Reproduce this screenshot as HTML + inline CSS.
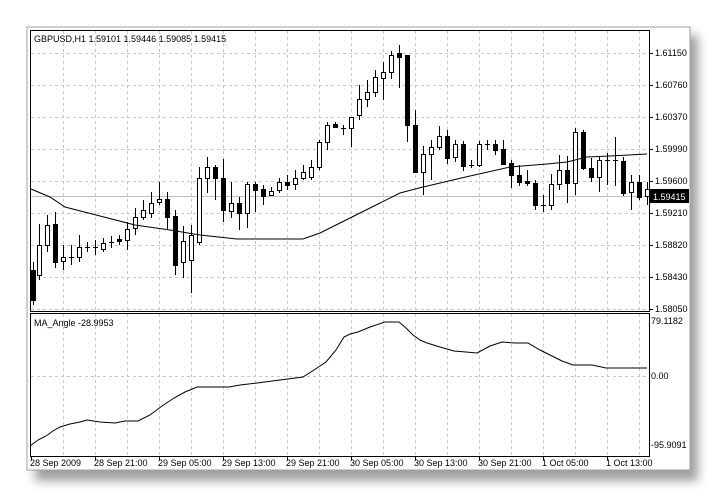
<!DOCTYPE html>
<html><head><meta charset="utf-8"><style>
html,body{margin:0;padding:0;background:#fff;width:717px;height:498px;overflow:hidden}
svg{display:block}
text{font-family:"Liberation Sans",sans-serif;font-size:9px;fill:#000}
</style></head><body>
<svg id="s" width="717" height="498" viewBox="0 0 717 498" xmlns="http://www.w3.org/2000/svg">
<defs>
<filter id="sh" x="-5%" y="-5%" width="115%" height="115%"><feGaussianBlur stdDeviation="5"/></filter>
</defs>
<rect x="35" y="35" width="663" height="446" fill="#888" filter="url(#sh)" opacity="0.8"/>
<rect x="27" y="27" width="663" height="443" fill="#fff" stroke="#a0a0a0"/>
<g id="grid" stroke="#c8c8c8" stroke-dasharray="3,3" stroke-width="1"></g>
<line x1="31" y1="196.5" x2="649" y2="196.5" stroke="#c0c0c0"/>
<g id="c" shape-rendering="crispEdges"></g>
<polyline fill="none" stroke="#000" stroke-width="1" points="31,189 50,197 65,207 100,216 135,225 170,230 200,235 237,239 303,239 320,233 340,223 360,213 380,203 400,193 423,187 470,176 510,167 547,164 567,162 587,157 610,156 647,154"/>
<polyline fill="none" stroke="#000" stroke-width="1" points="30,446 38,440 46,436 53,431 60,427 70,424 80,422 87,420 100,422 115,423 125,421 138,421 150,415 162,406 174,398 185,392 197,387 229,387 240,385 257,383 280,380 303,377 314,370 326,362 336,350 344,337 350,334 358,332 370,327 385,322 399,322 406,328 413,335 420,340 427,343 440,347 454,351 466,352 477,353 490,346 502,342 515,343 528,343 540,350 550,355 562,361 573,365 592,365 606,368 647,368"/>
<rect x="30.5" y="30.5" width="619" height="281" fill="none" stroke="#000"/>
<rect x="30.5" y="313.5" width="619" height="143" fill="none" stroke="#000"/>
<text x="34" y="42">GBPUSD,H1  1.59101 1.59446 1.59085 1.59415</text>
<text x="34" y="326">MA_Angle -28.9953</text>
<g id="ax"></g>
<rect x="650" y="189" width="39" height="14" fill="#000"/>
<text x="653" y="200" style="fill:#fff">1.59415</text>
</svg>
<script>
var ns="http://www.w3.org/2000/svg";
function el(p,n,a,t){var e=document.createElementNS(ns,n);for(var k in a)e.setAttribute(k,a[k]);if(t)e.textContent=t;document.getElementById(p).appendChild(e);}
for(var x=63;x<=639;x+=32){el("grid","line",{x1:x+.5,y1:31,x2:x+.5,y2:311});el("grid","line",{x1:x+.5,y1:314,x2:x+.5,y2:456});}
for(var y=53;y<=309;y+=32){el("grid","line",{x1:31,y1:y+.5,x2:649,y2:y+.5});}
el("grid","line",{x1:31,y1:376.5,x2:649,y2:376.5});
var pl=["1.61150","1.60760","1.60370","1.59990","1.59600","1.59210","1.58820","1.58430","1.58050"];
for(var i=0;i<9;i++){var yy=53+32*i;if(i!=4&&i!=5||true){el("ax","line",{x1:649,y1:yy+.5,x2:653,y2:yy+.5,stroke:"#000"});}
 el("ax","text",{x:655,y:yy+3},pl[i]);}
el("ax","text",{x:651,y:324},"79.1182");el("ax","text",{x:651,y:379},"0.00");el("ax","text",{x:651,y:448},"-95.9091");
var tl=["28 Sep 2009","28 Sep 21:00","29 Sep 05:00","29 Sep 13:00","29 Sep 21:00","30 Sep 05:00","30 Sep 13:00","30 Sep 21:00","1 Oct 05:00","1 Oct 13:00"];
for(var i=0;i<10;i++){var xx=31+64*i;el("ax","line",{x1:xx+.5,y1:456,x2:xx+.5,y2:460,stroke:"#000"});el("ax","text",{x:xx-1,y:466},tl[i]);}
// x, type(w/b/c), bodyTop, bodyBot, wickTop, wickBot
var C=[[33,'b',270,300,262,305],[39,'w',245,275,224,280],[47,'w',225,245,215,252],[55,'b',224,262,212,268],[63,'w',257,261,245,270],[71,'c',257,257,245,265],[79,'w',247,257,235,262],[87,'c',247,247,242,252],[95,'c',247,247,240,255],[103,'w',243,249,238,252],[111,'c',242,242,236,248],[119,'b',239,241,235,245],[127,'w',229,240,222,250],[135,'w',217,228,208,235],[143,'w',210,217,200,220],[151,'w',203,213,192,218],[159,'w',199,202,182,205],[167,'b',199,217,192,230],[175,'b',216,265,210,275],[183,'w',241,262,226,278],[191,'w',235,260,225,293],[199,'w',178,242,167,245],[207,'w',167,178,157,193],[215,'b',167,178,165,200],[223,'b',178,210,159,222],[231,'w',203,211,182,218],[239,'b',203,213,197,230],[247,'w',184,213,182,228],[255,'b',184,190,182,212],[263,'b',189,196,185,205],[271,'w',191,195,187,196],[279,'w',182,190,178,193],[287,'b',182,185,175,190],[295,'w',178,184,170,190],[303,'w',172,178,165,180],[311,'w',167,177,160,180],[319,'w',142,167,140,170],[327,'w',125,142,122,150],[335,'b',124,127,122,128],[343,'c',128,128,125,135],[351,'w',117,128,117,147],[359,'w',99,115,85,120],[367,'w',92,99,80,107],[375,'w',77,92,70,97],[383,'w',72,78,62,100],[391,'w',55,72,51,79],[399,'b',53,57,45,88],[407,'b',55,125,55,142],[415,'b',125,172,110,172],[423,'w',154,172,146,195],[431,'w',147,154,140,180],[439,'w',136,147,126,150],[447,'b',136,158,130,164],[455,'w',144,157,140,162],[463,'b',144,166,141,171],[471,'c',165,165,160,168],[479,'w',144,165,141,167],[487,'c',144,144,140,150],[495,'b',144,150,140,155],[503,'b',149,164,140,165],[511,'b',163,175,160,188],[519,'b',175,182,165,186],[527,'b',181,183,170,186],[535,'b',183,205,180,210],[543,'c',205,205,195,212],[551,'w',184,205,174,210],[559,'w',170,184,155,190],[567,'b',170,183,156,203],[575,'w',132,183,128,195],[583,'b',132,168,130,170],[591,'b',168,177,158,182],[599,'w',160,177,157,192],[607,'c',160,160,153,185],[615,'c',160,160,137,186],[623,'b',161,193,157,196],[631,'w',182,192,175,210],[639,'b',182,197,175,200],[647,'w',189,196,182,205]];
C.forEach(function(c){var x=c[0];el("c","line",{x1:x+.5,y1:c[4],x2:x+.5,y2:c[5],stroke:"#000"});
 if(c[1]=='c'){el("c","line",{x1:x-2,y1:c[2]+.5,x2:x+3,y2:c[2]+.5,stroke:"#000"});}
 else{var h=Math.max(1,c[3]-c[2]);el("c","rect",{x:x-2+.5,y:c[2]+.5,width:4,height:h,fill:c[1]=='b'?"#000":"#fff",stroke:"#000"});}});
</script>
</body></html>
